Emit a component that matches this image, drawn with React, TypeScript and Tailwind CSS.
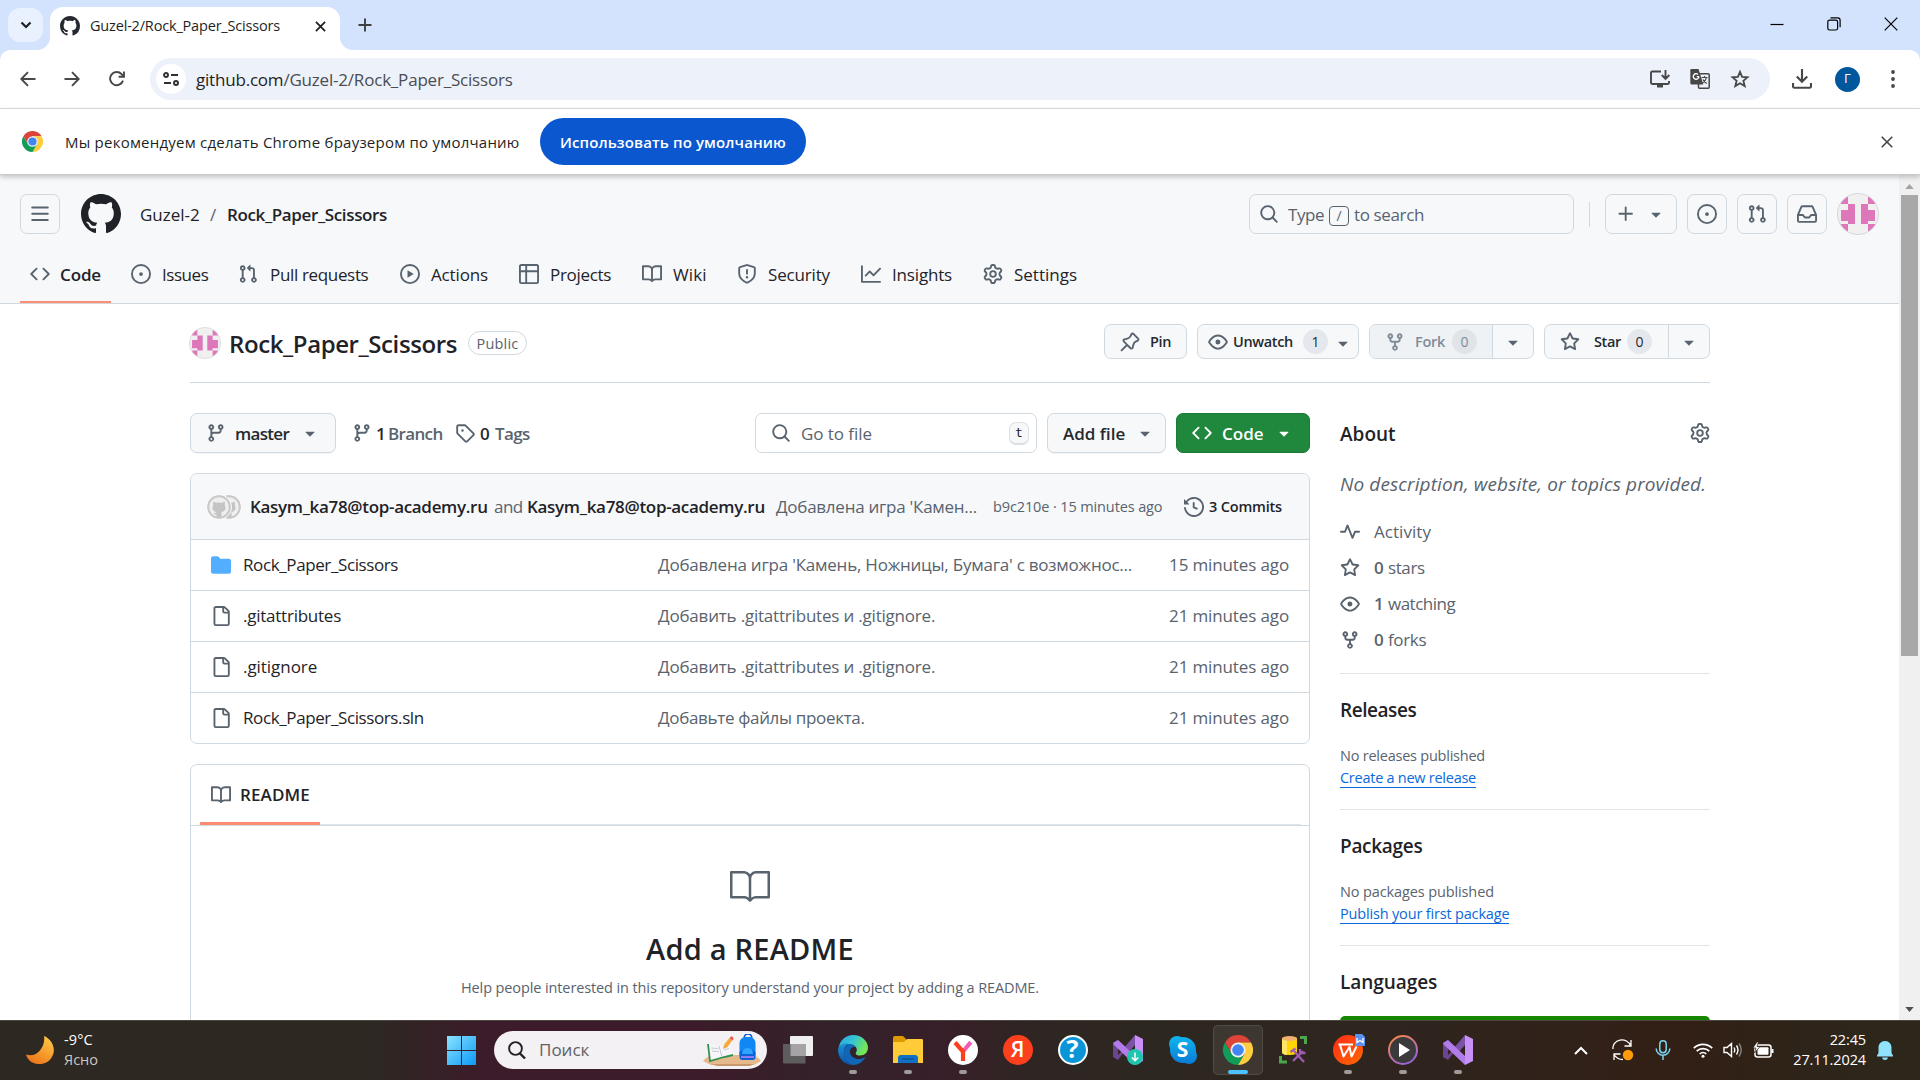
import type { ReactNode } from 'react';
import { clsx } from 'clsx';

const PATHS = {
  code: 'm11.28 3.22 4.25 4.25a.75.75 0 0 1 0 1.06l-4.25 4.25a.749.749 0 0 1-1.275-.326.749.749 0 0 1 .215-.734L13.94 8l-3.72-3.72a.749.749 0 0 1 .326-1.275.749.749 0 0 1 .734.215Zm-6.56 0a.751.751 0 0 1 1.042.018.751.751 0 0 1 .018 1.042L2.06 8l3.72 3.72a.749.749 0 0 1-.326 1.275.749.749 0 0 1-.734-.215L.47 8.53a.75.75 0 0 1 0-1.06Z',
  issue: 'M8 9.5a1.5 1.5 0 1 0 0-3 1.5 1.5 0 0 0 0 3Z M8 0a8 8 0 1 1 0 16A8 8 0 0 1 8 0ZM1.5 8a6.5 6.5 0 1 0 13 0 6.5 6.5 0 0 0-13 0Z',
  pr: 'M1.5 3.25a2.25 2.25 0 1 1 3 2.122v5.256a2.251 2.251 0 1 1-1.5 0V5.372A2.25 2.25 0 0 1 1.5 3.25Zm5.677-.177L9.573.677A.25.25 0 0 1 10 .854V2.5h1A2.5 2.5 0 0 1 13.5 5v5.628a2.251 2.251 0 1 1-1.5 0V5a1 1 0 0 0-1-1h-1v1.646a.25.25 0 0 1-.427.177L7.177 3.427a.25.25 0 0 1 0-.354ZM3.75 2.5a.75.75 0 1 0 0 1.5.75.75 0 0 0 0-1.5Zm0 9.5a.75.75 0 1 0 0 1.5.75.75 0 0 0 0-1.5Zm8.25.75a.75.75 0 1 0 1.5 0 .75.75 0 0 0-1.5 0Z',
  play: 'M8 0a8 8 0 1 1 0 16A8 8 0 0 1 8 0ZM1.5 8a6.5 6.5 0 1 0 13 0 6.5 6.5 0 0 0-13 0Zm4.879-2.773 4.264 2.559a.25.25 0 0 1 0 .428l-4.264 2.559A.25.25 0 0 1 6 10.559V5.442a.25.25 0 0 1 .379-.215Z',
  table: 'M0 1.75C0 .784.784 0 1.75 0h12.5C15.216 0 16 .784 16 1.75v12.5A1.75 1.75 0 0 1 14.25 16H1.75A1.75 1.75 0 0 1 0 14.25ZM6.5 6.5v8h7.75a.25.25 0 0 0 .25-.25V6.5Zm8-1.5V1.75a.25.25 0 0 0-.25-.25H6.5V5Zm-13 1.5v7.75c0 .138.112.25.25.25H5v-8ZM5 5V1.5H1.75a.25.25 0 0 0-.25.25V5Z',
  book: 'M0 1.75A.75.75 0 0 1 .75 1h4.253c1.227 0 2.317.59 3 1.501A3.743 3.743 0 0 1 11.006 1h4.245a.75.75 0 0 1 .75.75v10.5a.75.75 0 0 1-.75.75h-4.507a2.25 2.25 0 0 0-1.591.659l-.622.621a.75.75 0 0 1-1.06 0l-.622-.621A2.25 2.25 0 0 0 5.258 13H.75a.75.75 0 0 1-.75-.75Zm7.251 10.324.004-5.073-.002-2.253A2.25 2.25 0 0 0 5.003 2.5H1.5v9h3.757a3.75 3.75 0 0 1 1.994.574ZM8.755 4.75l-.004 7.322a3.752 3.752 0 0 1 1.992-.572H14.5v-9h-3.495a2.25 2.25 0 0 0-2.25 2.25Z',
  shield: 'M7.467.133a1.748 1.748 0 0 1 1.066 0l5.25 1.68A1.75 1.75 0 0 1 15 3.48V7c0 1.566-.32 3.182-1.303 4.682-.983 1.498-2.585 2.813-5.032 3.855a1.697 1.697 0 0 1-1.33 0c-2.447-1.042-4.049-2.357-5.032-3.855C1.32 10.182 1 8.566 1 7V3.48a1.75 1.75 0 0 1 1.217-1.667Zm.61 1.429a.25.25 0 0 0-.153 0l-5.25 1.68a.25.25 0 0 0-.174.238V7c0 1.358.275 2.666 1.057 3.86.784 1.194 2.121 2.34 4.366 3.297a.196.196 0 0 0 .154 0c2.245-.956 3.582-2.104 4.366-3.298C13.225 9.666 13.5 8.36 13.5 7V3.48a.251.251 0 0 0-.174-.237l-5.25-1.68ZM8.75 4.75v3a.75.75 0 0 1-1.5 0v-3a.75.75 0 0 1 1.5 0ZM9 10.5a1 1 0 1 1-2 0 1 1 0 0 1 2 0Z',
  graph: 'M1.5 1.75V13.5h13.75a.75.75 0 0 1 0 1.5H.75a.75.75 0 0 1-.75-.75V1.75a.75.75 0 0 1 1.5 0Zm14.28 2.53-5.25 5.25a.75.75 0 0 1-1.06 0L7 7.06 4.28 9.78a.751.751 0 0 1-1.042-.018.751.751 0 0 1-.018-1.042l3.25-3.25a.75.75 0 0 1 1.06 0L10 7.94l4.72-4.72a.751.751 0 0 1 1.042.018.751.751 0 0 1 .018 1.042Z',
  gear: 'M8 0a8.2 8.2 0 0 1 .701.031C9.444.095 9.99.645 10.16 1.29l.288 1.107c.018.066.079.158.212.224.231.114.454.243.668.386.123.082.233.09.299.071l1.103-.303c.644-.176 1.392.021 1.82.63.27.385.506.792.704 1.218.315.675.111 1.422-.364 1.891l-.814.806c-.049.048-.098.147-.088.294.016.257.016.515 0 .772-.01.147.038.246.088.294l.814.806c.475.469.679 1.216.364 1.891a7.977 7.977 0 0 1-.704 1.217c-.428.61-1.176.807-1.82.63l-1.102-.302c-.067-.019-.177-.011-.3.071a5.909 5.909 0 0 1-.668.386c-.133.066-.194.158-.211.224l-.29 1.106c-.168.646-.715 1.196-1.458 1.26a8.006 8.006 0 0 1-1.402 0c-.743-.064-1.289-.614-1.458-1.26l-.289-1.106c-.018-.066-.079-.158-.212-.224a5.738 5.738 0 0 1-.668-.386c-.123-.082-.233-.09-.299-.071l-1.103.303c-.644.176-1.392-.021-1.82-.63a8.12 8.12 0 0 1-.704-1.218c-.315-.675-.111-1.422.363-1.891l.815-.806c.05-.048.098-.147.088-.294a6.214 6.214 0 0 1 0-.772c.01-.147-.038-.246-.088-.294l-.815-.806C.635 6.045.431 5.298.746 4.623a7.92 7.92 0 0 1 .704-1.217c.428-.61 1.176-.807 1.82-.63l1.102.302c.067.019.177.011.3-.071.214-.143.437-.272.668-.386.133-.066.194-.158.211-.224l.29-1.106C6.009.645 6.556.095 7.299.03 7.53.01 7.764 0 8 0Zm-.571 1.525c-.036.003-.108.036-.137.146l-.289 1.105c-.147.561-.549.967-.998 1.189-.173.086-.34.183-.5.29-.417.278-.97.423-1.529.27l-1.103-.303c-.109-.03-.175.016-.195.045-.22.312-.412.644-.573.99-.014.031-.021.11.059.19l.815.806c.411.406.562.957.53 1.456a4.709 4.709 0 0 0 0 .582c.032.499-.119 1.05-.53 1.456l-.815.806c-.081.08-.073.159-.059.19.162.346.353.677.573.989.02.03.085.076.195.046l1.102-.303c.56-.153 1.113-.008 1.53.27.161.107.328.204.501.29.447.222.85.629.997 1.189l.289 1.105c.029.109.101.143.137.146a6.6 6.6 0 0 0 1.142 0c.036-.003.108-.036.137-.146l.289-1.105c.147-.561.549-.967.998-1.189.173-.086.34-.183.5-.29.417-.278.97-.423 1.529-.27l1.103.303c.109.029.175-.016.195-.045.22-.313.411-.644.573-.99.014-.031.021-.11-.059-.19l-.815-.806c-.411-.406-.562-.957-.53-1.456a4.709 4.709 0 0 0 0-.582c-.032-.499.119-1.05.53-1.456l.815-.806c.081-.08.073-.159.059-.19a6.464 6.464 0 0 0-.573-.989c-.02-.03-.085-.076-.195-.046l-1.102.303c-.56.153-1.113.008-1.53-.27a4.44 4.44 0 0 0-.501-.29c-.447-.222-.85-.629-.997-1.189l-.289-1.105c-.029-.11-.101-.143-.137-.146a6.6 6.6 0 0 0-1.142 0ZM11 8a3 3 0 1 1-6 0 3 3 0 0 1 6 0ZM9.5 8a1.5 1.5 0 1 0-3.001.001A1.5 1.5 0 0 0 9.5 8Z',
  github: 'M8 0c4.42 0 8 3.58 8 8a8.013 8.013 0 0 1-5.45 7.59c-.4.08-.55-.17-.55-.38 0-.27.01-1.13.01-2.2 0-.75-.25-1.23-.54-1.48 1.78-.2 3.65-.88 3.65-3.95 0-.88-.31-1.59-.82-2.15.08-.2.36-1.02-.08-2.12 0 0-.67-.22-2.2.82-.64-.18-1.32-.27-2-.27-.68 0-1.36.09-2 .27-1.53-1.03-2.2-.82-2.2-.82-.44 1.1-.16 1.92-.08 2.12-.51.56-.82 1.28-.82 2.15 0 3.06 1.86 3.75 3.64 3.95-.23.2-.44.55-.51 1.07-.46.21-1.61.55-2.33-.66-.15-.24-.6-.83-1.23-.82-.67.01-.27.38.01.53.34.19.73.9.82 1.13.16.45.68 1.31 2.69.94 0 .67.01 1.3.01 1.49 0 .21-.15.45-.55.38A7.995 7.995 0 0 1 0 8c0-4.42 3.58-8 8-8Z',
  search: 'M10.68 11.74a6 6 0 0 1-7.922-8.982 6 6 0 0 1 8.982 7.922l3.04 3.04a.749.749 0 0 1-.326 1.275.749.749 0 0 1-.734-.215ZM11.5 7a4.499 4.499 0 1 0-8.997 0A4.499 4.499 0 0 0 11.5 7Z',
  branch: 'M9.5 3.25a2.25 2.25 0 1 1 3 2.122V6A2.5 2.5 0 0 1 10 8.5H6a1 1 0 0 0-1 1v1.128a2.251 2.251 0 1 1-1.5 0V5.372a2.25 2.25 0 1 1 1.5 0v1.836A2.493 2.493 0 0 1 6 7h4a1 1 0 0 0 1-1v-.628A2.25 2.25 0 0 1 9.5 3.25Zm-6 0a.75.75 0 1 0 1.5 0 .75.75 0 0 0-1.5 0Zm8.25-.75a.75.75 0 1 0 0 1.5.75.75 0 0 0 0-1.5ZM4.25 12a.75.75 0 1 0 0 1.5.75.75 0 0 0 0-1.5Z',
  tag: 'M1 7.775V2.75C1 1.784 1.784 1 2.75 1h5.025c.464 0 .91.184 1.238.513l6.25 6.25a1.75 1.75 0 0 1 0 2.474l-5.026 5.026a1.75 1.75 0 0 1-2.474 0l-6.25-6.25A1.752 1.752 0 0 1 1 7.775Zm1.5 0c0 .066.026.13.073.177l6.25 6.25a.25.25 0 0 0 .354 0l5.025-5.025a.25.25 0 0 0 0-.354l-6.25-6.25a.25.25 0 0 0-.177-.073H2.75a.25.25 0 0 0-.25.25ZM6 5a1 1 0 1 1 0 2 1 1 0 0 1 0-2Z',
  file: 'M2 1.75C2 .784 2.784 0 3.75 0h6.586c.464 0 .909.184 1.237.513l2.914 2.914c.329.328.513.773.513 1.237v9.586A1.75 1.75 0 0 1 13.25 16h-9.5A1.75 1.75 0 0 1 2 14.25Zm1.75-.25a.25.25 0 0 0-.25.25v12.5c0 .138.112.25.25.25h9.5a.25.25 0 0 0 .25-.25V6h-2.75A1.75 1.75 0 0 1 9 4.25V1.5Zm6.75.062V4.25c0 .138.112.25.25.25h2.688l-.011-.013-2.914-2.914-.013-.011Z',
  folder: 'M1.75 1A1.75 1.75 0 0 0 0 2.75v10.5C0 14.216.784 15 1.75 15h12.5A1.75 1.75 0 0 0 16 13.25v-8.5A1.75 1.75 0 0 0 14.25 3H7.5a.25.25 0 0 1-.2-.1l-.9-1.2C6.07 1.26 5.55 1 5 1H1.75Z',
  history: 'm.427 1.927 1.215 1.215a8.002 8.002 0 1 1-1.6 5.685.75.75 0 1 1 1.493-.154 6.5 6.5 0 1 0 1.18-4.458l1.358 1.358A.25.25 0 0 1 3.896 6H.25A.25.25 0 0 1 0 5.75V2.104a.25.25 0 0 1 .427-.177ZM7.75 4a.75.75 0 0 1 .75.75v2.992l2.028.812a.75.75 0 0 1-.557 1.392l-2.5-1A.751.751 0 0 1 7 8.25v-3.5A.75.75 0 0 1 7.75 4Z',
  pulse: 'M6 2c.306 0 .582.187.696.471L10 10.731l1.304-3.26A.751.751 0 0 1 12 7h3.25a.75.75 0 0 1 0 1.5h-2.742l-1.812 4.528a.751.751 0 0 1-1.392 0L6 4.77 4.696 8.03A.75.75 0 0 1 4 8.5H.75a.75.75 0 0 1 0-1.5h2.742l1.812-4.529A.751.751 0 0 1 6 2Z',
  star: 'M8 .25a.75.75 0 0 1 .673.418l1.882 3.815 4.21.612a.75.75 0 0 1 .416 1.279l-3.046 2.97.719 4.192a.751.751 0 0 1-1.088.791L8 12.347l-3.766 1.98a.75.75 0 0 1-1.088-.79l.72-4.194L.818 6.374a.75.75 0 0 1 .416-1.28l4.21-.611L7.327.668A.75.75 0 0 1 8 .25Zm0 2.445L6.615 5.5a.75.75 0 0 1-.564.41l-3.097.45 2.24 2.184a.75.75 0 0 1 .216.664l-.528 3.084 2.769-1.456a.75.75 0 0 1 .698 0l2.77 1.456-.53-3.084a.75.75 0 0 1 .216-.664l2.24-2.183-3.096-.45a.75.75 0 0 1-.564-.41L8 2.694Z',
  eye: 'M8 2c1.981 0 3.671.992 4.933 2.078 1.27 1.091 2.187 2.345 2.637 3.023a1.62 1.62 0 0 1 0 1.798c-.45.678-1.367 1.932-2.637 3.023C11.67 13.008 9.981 14 8 14c-1.981 0-3.671-.992-4.933-2.078C1.797 10.83.88 9.576.43 8.898a1.62 1.62 0 0 1 0-1.798c.45-.677 1.367-1.931 2.637-3.022C4.33 2.992 6.019 2 8 2ZM1.679 7.932a.12.12 0 0 0 0 .136c.411.622 1.241 1.75 2.366 2.717C5.176 11.758 6.527 12.5 8 12.5c1.473 0 2.825-.742 3.955-1.715 1.124-.967 1.954-2.096 2.366-2.717a.12.12 0 0 0 0-.136c-.412-.621-1.242-1.75-2.366-2.717C10.824 4.242 9.473 3.5 8 3.5c-1.473 0-2.825.742-3.955 1.715-1.124.967-1.954 2.096-2.366 2.717ZM8 10a2 2 0 1 1-.001-3.999A2 2 0 0 1 8 10Z',
  fork: 'M5 5.372v.878c0 .414.336.75.75.75h4.5a.75.75 0 0 0 .75-.75v-.878a2.25 2.25 0 1 1 1.5 0v.878a2.25 2.25 0 0 1-2.25 2.25h-1.5v2.128a2.251 2.251 0 1 1-1.5 0V8.5h-1.5A2.25 2.25 0 0 1 3.5 6.25v-.878a2.25 2.25 0 1 1 1.5 0ZM5 3.25a.75.75 0 1 0-1.5 0 .75.75 0 0 0 1.5 0Zm6.75.75a.75.75 0 1 0 0-1.5.75.75 0 0 0 0 1.5Zm-3 8.75a.75.75 0 1 0-1.5 0 .75.75 0 0 0 1.5 0Z',
  pin: 'm11.294.984 3.722 3.722a1.75 1.75 0 0 1-.504 2.826l-1.327.613a3.089 3.089 0 0 0-1.707 2.084l-.584 2.454c-.317 1.332-1.972 1.8-2.94.832L5.75 11.311 1.78 15.28a.749.749 0 1 1-1.06-1.06l3.969-3.97-2.204-2.204c-.968-.968-.5-2.623.832-2.94l2.454-.584a3.08 3.08 0 0 0 2.084-1.707l.613-1.327a1.75 1.75 0 0 1 2.826-.504ZM6.283 9.723l2.732 2.731a.25.25 0 0 0 .42-.119l.584-2.454a4.586 4.586 0 0 1 2.537-3.098l1.328-.613a.25.25 0 0 0 .072-.404l-3.722-3.722a.25.25 0 0 0-.404.072l-.613 1.328a4.584 4.584 0 0 1-3.098 2.537l-2.454.584a.25.25 0 0 0-.119.42l2.731 2.732Z',
  inbox: 'M2.8 2.06A1.75 1.75 0 0 1 4.41 1h7.18c.7 0 1.333.417 1.61 1.06l2.74 6.395c.04.093.06.194.06.295v4.5A1.75 1.75 0 0 1 14.25 15H1.75A1.75 1.75 0 0 1 0 13.25v-4.5c0-.101.02-.202.06-.295Zm1.61.44a.25.25 0 0 0-.23.152L1.887 8H4.75a.75.75 0 0 1 .6.3L6.625 10h2.75l1.275-1.7a.75.75 0 0 1 .6-.3h2.863L11.82 2.652a.25.25 0 0 0-.23-.152Zm10.09 7h-2.875l-1.275 1.7a.75.75 0 0 1-.6.3h-3.5a.75.75 0 0 1-.6-.3L4.375 9.5H1.5v3.75c0 .138.112.25.25.25h12.5a.25.25 0 0 0 .25-.25Z',
  plus: 'M7.75 2a.75.75 0 0 1 .75.75V7h4.25a.75.75 0 0 1 0 1.5H8.5v4.25a.75.75 0 0 1-1.5 0V8.5H2.75a.75.75 0 0 1 0-1.5H7V2.75A.75.75 0 0 1 7.75 2Z',
  bars: 'M1 2.75A.75.75 0 0 1 1.75 2h12.5a.75.75 0 0 1 0 1.5H1.75A.75.75 0 0 1 1 2.75Zm0 5A.75.75 0 0 1 1.75 7h12.5a.75.75 0 0 1 0 1.5H1.75A.75.75 0 0 1 1 7.75ZM1.75 12h12.5a.75.75 0 0 1 0 1.5H1.75a.75.75 0 0 1 0-1.5Z',
  caret: 'm4.427 7.427 3.396 3.396a.25.25 0 0 0 .354 0l3.396-3.396A.25.25 0 0 0 11.396 7H4.604a.25.25 0 0 0-.177.427Z',
};
type IconName = keyof typeof PATHS;

function Oct({ n, className = 'size-5' }: { n: IconName; className?: string }) {
  return (
    <svg viewBox="0 0 16 16" fill="currentColor" className={clsx('shrink-0', className)}>
      <path d={PATHS[n]} />
    </svg>
  );
}

function Identicon({ className }: { className: string }) {
  return (
    <svg viewBox="0 0 42 42" className={clsx('shrink-0', className)}>
      <defs>
        <clipPath id="avatar-clip"><circle cx="21" cy="21" r="20.5" /></clipPath>
      </defs>
      <circle cx="21" cy="21" r="20.5" fill="#f0f0f0" />
      <g fill="#de77ba" clipPath="url(#avatar-clip)">
        <path d="M4 4h7v7H4zM31 4h7v7h-7zM4 31h7v8H4zM31 31h7v8h-7z" />
        <path d="M11 11h7v20h-7v-3H4V17h7zM24 11h7v6h7v11h-7v3h-7z" />
      </g>
      <circle cx="21" cy="21" r="20.5" fill="none" stroke="#d5d7da" strokeWidth="1" />
    </svg>
  );
}

function ChromeLogo({ className }: { className: string }) {
  return (
    <svg viewBox="0 0 48 48" className={className}>
      <path d="M24 12H44.8A24 24 0 0 0 3.2 12L13.6 30Z" fill="#db4437" />
      <path d="M34.4 30 24 48A24 24 0 0 0 44.8 12H24Z" fill="#ffcd40" />
      <path d="M13.6 30 3.2 12A24 24 0 0 0 24 48L34.4 30Z" fill="#0f9d58" />
      <circle cx="24" cy="24" r="12" fill="#f1f1f1" />
      <circle cx="24" cy="24" r="9.3" fill="#4285f4" />
    </svg>
  );
}

function TabStrip() {
  return (
    <div className="flex h-[50px] shrink-0 bg-[#d3e3fd] text-[#1f1f1f]">
      <div className="ml-2 mt-2 grid h-[34px] w-[35px] place-items-center rounded-[12px] bg-[#e9f0fe]">
        <svg viewBox="0 0 12 12" className="size-3" fill="none" stroke="#1f1f1f" strokeWidth="2.2"><path d="m1.5 3.5 4.5 4.5 4.5-4.5" /></svg>
      </div>
      <div className="relative ml-[7px] mt-[7px] flex h-[43px] w-[290px] items-center rounded-t-[13px] bg-white pb-[14px] pl-[10px]">
        <svg viewBox="0 0 13 13" className="absolute -left-[13px] bottom-0 size-[13px]" fill="#fff"><path d="M13 0v13H0A13 13 0 0 0 13 0Z" /></svg>
        <svg viewBox="0 0 13 13" className="absolute -right-[13px] bottom-0 size-[13px]" fill="#fff"><path d="M0 0v13h13A13 13 0 0 1 0 0Z" /></svg>
        <div className="flex w-full items-center pt-[9px]">
          <Oct n="github" className="size-5 text-[#24292f]" />
          <span className="ml-[10px] w-[220px] text-[14.5px] tracking-[-0.18px]">Guzel-2/Rock_Paper_Scissors</span>
          <svg viewBox="0 0 12 12" className="ml-[5px] size-[11px]" stroke="#1f1f1f" strokeWidth="1.9"><path d="m1 1 10 10M11 1 1 11" /></svg>
        </div>
      </div>
      <svg viewBox="0 0 14 14" className="ml-[18px] mt-[18px] size-[14px]" stroke="#3c4043" strokeWidth="1.9"><path d="M7 .5v13M.5 7h13" /></svg>
      <div className="ml-auto flex h-[48px] items-center gap-[43px] pr-[22px]">
        <svg viewBox="0 0 14 14" className="size-[14px]" stroke="#000" strokeWidth="1.2"><path d="M.5 7.5h13" /></svg>
        <svg viewBox="0 0 14 14" className="size-[14px]" fill="none" stroke="#000" strokeWidth="1.2"><rect x=".8" y="3.2" width="9.8" height="9.8" rx="1.8" /><path d="M3.5.9h7.2a2.4 2.4 0 0 1 2.4 2.4v7" /></svg>
        <svg viewBox="0 0 14 14" className="size-[14px]" stroke="#000" strokeWidth="1.2"><path d="m.7.7 12.6 12.6M13.3.7.7 13.3" /></svg>
      </div>
    </div>
  );
}

function Toolbar() {
  return (
    <div className="h-[59px] shrink-0 bg-[#d3e3fd]">
      <div className="flex h-[59px] items-center rounded-t-[10px] border-b border-[#dcdee1] bg-white text-[#474747]">
        <svg viewBox="0 0 16 16" className="ml-5 size-4" fill="none" stroke="currentColor" strokeWidth="1.9"><path d="M15.5 8H1.5M8 1.2 1.3 8 8 14.8" /></svg>
        <svg viewBox="0 0 16 16" className="ml-[28px] size-4" fill="none" stroke="currentColor" strokeWidth="1.9"><path d="M.5 8h14M8 1.2 14.7 8 8 14.8" /></svg>
        <svg viewBox="0 0 16 16" className="ml-[29px] mr-px size-4" fill="none" stroke="currentColor" strokeWidth="1.9"><path d="M14 9.6A6.6 6.6 0 1 1 12.6 3.2L15 5.6M15 .4v5.4H9.6" /></svg>
        <div className="ml-[24px] flex h-[42px] w-[1620px] items-center rounded-full bg-[#edf1fa] pl-[6px]">
          <div className="grid size-[30px] place-items-center rounded-full bg-white">
            <svg viewBox="0 0 16 14" className="h-[14px] w-4" fill="none" stroke="#303030" strokeWidth="1.9"><circle cx="3" cy="3" r="2" /><path d="M8 3h7M1 11h7" /><circle cx="13" cy="11" r="2" /></svg>
          </div>
          <span className="ml-[10px] whitespace-pre pt-px text-[17px] tracking-[-0.2px] text-[#4a4d51]"><span className="text-[#1f1f1f]">github.com</span>/Guzel-2/Rock_Paper_Scissors</span>
          <svg viewBox="0 0 20 18" className="ml-auto h-[18px] w-5" fill="none" stroke="currentColor" strokeWidth="1.9"><path d="M11 1.5H2.2Q1 1.5 1 2.7v10.1Q1 14 2.2 14h15.6Q19 14 19 12.8V11M15.5 0v8M11.8 5l3.7 3.8L19.3 5" /><path d="M7 16h6" strokeWidth="3" /></svg>
          <svg viewBox="0 0 20 20" className="ml-[20px] size-5"><rect x="8.5" y="4.8" width="10.7" height="14.4" rx="1" fill="#edf1fa" stroke="#474747" strokeWidth="1.5" /><path d="M1.5 0h7l4.8 15.5H1.8Q.3 15.5.3 14V1.2Q.3 0 1.5 0Z" fill="#474747" /><path d="M9.2 7.6H6.7M8.9 7.7A2.8 2.8 0 1 1 8 5.4" stroke="#fff" strokeWidth="1.4" fill="none" /><path d="M11.5 8.5h6M14.500 7v1.5M16.5 8.5c-.5 2.500-2 4-4 5.500M13 10.5c.8 1.8 2 3 3.700 4" stroke="#474747" strokeWidth="1.2" fill="none" /></svg>
          <svg viewBox="0 0 20 20" className="ml-[20px] mr-[20px] size-5" fill="none" stroke="currentColor" strokeWidth="1.8" strokeLinejoin="miter"><path d="m10 2.8 2.1 5 5.4.5-4.1 3.5 1.3 5.3-4.7-2.9-4.7 2.9 1.3-5.3L2.5 8.3l5.4-.5Z" /></svg>
        </div>
        <svg viewBox="0 0 20 20" className="ml-[22px] size-5" fill="none" stroke="currentColor" strokeWidth="2.1"><path d="M10 0v12.5M4.8 7.5l5.2 5.3 5.2-5.3M1 14v3.3q0 1.4 1.4 1.4h15.2q1.4 0 1.4-1.4V14" /></svg>
        <div className="ml-[23px] grid size-[25px] place-items-center rounded-full bg-[#01579b] text-[13px] text-white">Г</div>
        <svg viewBox="0 0 4 18" className="ml-[31px] h-[18px] w-1" fill="currentColor"><circle cx="2" cy="2" r="1.9" /><circle cx="2" cy="9" r="1.9" /><circle cx="2" cy="16" r="1.9" /></svg>
      </div>
    </div>
  );
}

function InfoBar() {
  return (
    <div className="relative z-10 flex h-[66px] shrink-0 items-center border-b border-[#c9cccf] bg-white text-[15px] text-[#1f1f1f] shadow-[0_2px_5px_rgba(0,0,0,0.22)]">
      <ChromeLogo className="ml-[22px] size-[21px]" />
      <span className="ml-[22px] w-[476px] whitespace-nowrap pt-px tracking-[0.23px]">Мы рекомендуем сделать Chrome браузером по умолчанию</span>
      <div className="-ml-px flex h-[47px] w-[266px] items-center justify-center whitespace-nowrap rounded-full bg-[#0b57d0] pt-px font-semibold tracking-[0.12px] text-white">Использовать по умолчанию</div>
      <svg viewBox="0 0 12 12" className="ml-auto mr-[27px] size-[12px]" stroke="#474747" strokeWidth="1.6"><path d="m.7.7 10.6 10.6M11.3.7.7 11.3" /></svg>
    </div>
  );
}

function HeaderButton({ className, children }: { className?: string; children: ReactNode }) {
  return <div className={clsx('flex h-10 shrink-0 items-center justify-center rounded-[7px] border border-[#d1d9e0] text-[#59636e]', className)}>{children}</div>;
}

const NAV: { icon: IconName; label: string; box: string; text: string }[] = [
  { icon: 'code', label: 'Code', box: 'w-[91px]', text: 'font-semibold tracking-[-0.13px]' },
  { icon: 'issue', label: 'Issues', box: 'ml-[10px] w-[97px]', text: 'ml-px tracking-[-0.45px]' },
  { icon: 'pr', label: 'Pull requests', box: 'ml-[10px] w-[152px]', text: 'ml-[2px] tracking-[-0.34px]' },
  { icon: 'play', label: 'Actions', box: 'ml-[10px] w-[109px]', text: 'ml-px tracking-[-0.14px]' },
  { icon: 'table', label: 'Projects', box: 'ml-[10px] w-[112px]', text: 'ml-px tracking-[-0.32px]' },
  { icon: 'book', label: 'Wiki', box: 'ml-[11px] w-[85px]', text: 'ml-px tracking-[0.1px]' },
  { icon: 'shield', label: 'Security', box: 'ml-[10px] w-[113px]', text: 'ml-px tracking-[-0.16px]' },
  { icon: 'graph', label: 'Insights', box: 'ml-[11px] w-[112px]', text: 'ml-px tracking-[-0.17px]' },
  { icon: 'gear', label: 'Settings', box: 'ml-[10px] w-[113px]', text: 'ml-px' },
];

function RepoHeader() {
  return (
    <div className="h-[129px] border-b border-[#d1d9e0] bg-[#f6f8fa] pt-[19px] text-[17px] text-[#1f2328]">
      <div className="flex h-10 items-center pl-5">
        <HeaderButton className="w-10"><Oct n="bars" /></HeaderButton>
        <Oct n="github" className="ml-[21px] size-10" />
        <span className="ml-[19px] w-[60px] pt-px">Guzel-2</span>
        <span className="ml-[10px] w-[8px] pt-px text-[#59636e]">/</span>
        <span className="ml-[9px] pt-px font-semibold tracking-[-0.37px]">Rock_Paper_Scissors</span>
        <div className="ml-auto flex h-10 w-[325px] items-center rounded-[7px] border border-[#d1d9e0] pl-[9px] text-[#59636e]">
          <Oct n="search" />
          <span className="ml-[9px] pt-px tracking-[-0.46px]">Type</span>
          <span className="mx-[5px] mt-[3px] grid h-[20px] w-[20px] place-items-center rounded-[4px] border border-[#59636e] text-[14px] leading-none">/</span>
          <span className="pt-px tracking-[-0.37px]">to search</span>
        </div>
        <div className="ml-[15px] h-[25px] w-px bg-[#d1d9e0]" />
        <HeaderButton className="ml-[15px] w-[72px] gap-[10px]"><Oct n="plus" /><Oct n="caret" /></HeaderButton>
        <HeaderButton className="ml-[10px] w-10"><Oct n="issue" /></HeaderButton>
        <HeaderButton className="ml-[10px] w-10"><Oct n="pr" /></HeaderButton>
        <HeaderButton className="ml-[10px] w-10"><Oct n="inbox" /></HeaderButton>
        <Identicon className="ml-[10px] mr-[20px] size-[42px]" />
      </div>
      <div className="flex h-[69px] pl-5">
        {NAV.map((t, i) => (
          <div key={t.label} className={clsx('relative flex shrink-0 items-center gap-[10px] pl-[10px] pt-[11px]', t.box)}>
            <Oct n={t.icon} className="size-5 text-[#59636e]" />
            <span className={clsx('whitespace-nowrap pt-px', t.text)}>{t.label}</span>
            {i === 0 && <div className="absolute bottom-0 left-0 h-[2px] w-full bg-[#fd8c73]" />}
          </div>
        ))}
      </div>
    </div>
  );
}

function Counter({ children, className = 'bg-[#e4e8ec]' }: { children: ReactNode; className?: string }) {
  return <span className={clsx('grid size-[25px] place-items-center rounded-full text-[14px] font-medium', className)}>{children}</span>;
}

const BTN = 'flex items-center rounded-[7px] border border-[#d1d9e0] bg-[#f6f8fa]';

function RepoTitle() {
  return (
    <div className="flex h-[79px] items-start border-b border-[#d1d9e0] text-[14.5px] font-semibold text-[#25292e]">
      <Identicon className="-ml-px mt-[23px] size-8" />
      <span className="ml-[8px] mt-[22px] w-[239px] text-[24px] leading-[36px] tracking-[-0.41px] text-[#1f2328]">Rock_Paper_Scissors</span>
      <span className="mt-[27px] flex h-[24px] w-[59px] items-center justify-center rounded-full border border-[#d1d9e0] pt-px font-normal tracking-[0.21px] text-[#59636e]">Public</span>
      <div className="ml-auto mt-5 flex gap-[10px]">
        <div className={clsx(BTN, 'h-[35px] w-[83px] pl-[15px]')}><Oct n="pin" className="size-5 text-[#59636e]" /><span className="ml-[10px] tracking-[-0.39px]">Pin</span></div>
        <div className={clsx(BTN, 'h-[35px] w-[162px] pl-[10px]')}>
          <Oct n="eye" className="size-5 text-[#59636e]" /><span className="ml-[5px] w-[60px] tracking-[-0.34px]">Unwatch</span>
          <Counter className="ml-[10px] bg-[#e4e8ec]">1</Counter><Oct n="caret" className="ml-[5px] mt-[2px] size-5 text-[#59636e]" />
        </div>
        <div className={clsx(BTN, 'h-[35px] w-[165px] overflow-hidden')}>
          <div className="flex h-full w-[123px] items-center border-r border-[#d1d9e0] bg-[#eff2f5] pl-[15px] text-[#818b98]">
            <Oct n="fork" /><span className="ml-[10px] w-[30px] tracking-[-0.29px]">Fork</span><Counter className="ml-[7px] bg-[#e0e4e8]">0</Counter>
          </div>
          <Oct n="caret" className="ml-[10px] size-5 text-[#59636e]" />
        </div>
        <div className={clsx(BTN, 'h-[35px] w-[166px]')}>
          <div className="flex h-full w-[124px] items-center border-r border-[#d1d9e0] pl-[15px]">
            <Oct n="star" className="size-5 text-[#59636e]" /><span className="ml-[14px] w-[27px] tracking-[-0.35px]">Star</span><Counter className="ml-[6px] bg-[#e4e8ec]">0</Counter>
          </div>
          <Oct n="caret" className="ml-[10px] size-5 text-[#59636e]" />
        </div>
      </div>
    </div>
  );
}

function FileToolbar() {
  return (
    <div className="flex h-10 items-center text-[17px] text-[#25292e]">
      <div className={clsx(BTN, 'h-10 w-[146px] pl-[15px] font-semibold shadow-[0_1px_0_rgba(31,35,40,0.04)]')}>
        <Oct n="branch" className="size-5 text-[#59636e]" /><span className="ml-[9px] w-[54px] pt-px tracking-[-0.7px]">master</span><Oct n="caret" className="ml-[11px] size-5 text-[#59636e]" />
      </div>
      <Oct n="branch" className="ml-[16px] size-5 text-[#59636e]" />
      <span className="ml-[4px] w-[12px] pt-px font-semibold">1</span>
      <span className="w-[67px] pt-px font-semibold tracking-[-0.65px] text-[#59636e]">Branch</span>
      <Oct n="tag" className="size-5 text-[#59636e]" />
      <span className="ml-[5px] w-[15px] pt-px font-semibold">0</span>
      <span className="pt-px font-semibold tracking-[-0.6px] text-[#59636e]">Tags</span>
      <div className="ml-auto flex h-10 w-[282px] items-center rounded-[7px] border border-[#d1d9e0] pl-[15px] text-[#59636e]">
        <Oct n="search" /><span className="ml-[10px] pt-px tracking-[-0.06px]">Go to file</span>
        <span className="ml-auto mr-[7px] grid h-[23px] w-[20px] place-items-center rounded-[7px] border border-b-2 border-[#dbe0e5] bg-[#f6f8fa] font-['DejaVu_Sans_Mono',monospace] text-[13px] leading-none text-[#1f2328]">t</span>
      </div>
      <div className={clsx(BTN, 'ml-[10px] h-10 w-[119px] pl-[15px] font-semibold shadow-[0_1px_0_rgba(31,35,40,0.04)]')}>
        <span className="w-[63px] whitespace-nowrap pt-px">Add file</span><Oct n="caret" className="ml-[9px] size-5 text-[#59636e]" />
      </div>
      <div className="ml-[10px] flex h-10 w-[134px] items-center rounded-[7px] border border-[#1b7a36] bg-[#1f883d] pl-[15px] font-semibold text-white">
        <Oct n="code" /><span className="ml-[10px] w-[43px] pt-px">Code</span><Oct n="caret" className="ml-[9px] size-5" />
      </div>
    </div>
  );
}

const FILES: { icon: IconName; name: string; nameCls: string; msg: string; msgCls: string; when: string }[] = [
  { icon: 'folder', name: 'Rock_Paper_Scissors', nameCls: 'tracking-[-0.39px]', msg: "Добавлена игра 'Камень, Ножницы, Бумага' с возможнос...", msgCls: 'tracking-[-0.22px]', when: '15 minutes ago' },
  { icon: 'file', name: '.gitattributes', nameCls: 'tracking-[-0.24px]', msg: 'Добавить .gitattributes и .gitignore.', msgCls: 'tracking-[-0.2px]', when: '21 minutes ago' },
  { icon: 'file', name: '.gitignore', nameCls: 'tracking-[-0.05px]', msg: 'Добавить .gitattributes и .gitignore.', msgCls: 'tracking-[-0.2px]', when: '21 minutes ago' },
  { icon: 'file', name: 'Rock_Paper_Scissors.sln', nameCls: 'tracking-[-0.39px]', msg: 'Добавьте файлы проекта.', msgCls: 'tracking-[-0.33px]', when: '21 minutes ago' },
];

function Octocat({ className }: { className?: string }) {
  return (
    <svg viewBox="0 0 26 26" className={clsx('size-[26px] shrink-0', className)}>
      <circle cx="13" cy="13" r="12.5" fill="#c9c9c9" stroke="#fff" />
      <circle cx="13" cy="13" r="9.8" fill="#efefef" />
      <path d="M7.5 7.5 10 8.8q3-.7 6 0l2.500-1.300q.8 2 .3 3.500 2.400 6-3.300 7v5.300h-5V20.500q-2 .3-3-1.800 2 .8 3-.7-5.700-1-3.300-7-.5-1.500.3-3.500Z" fill="#c4c4c4" />
    </svg>
  );
}

function FileTable() {
  return (
    <div className="mt-5 overflow-hidden rounded-[7px] border border-[#d1d9e0] text-[17px] text-[#1f2328]">
      <div className="flex h-[66px] items-center whitespace-nowrap border-b border-[#d1d9e0] bg-[#f6f8fa] pl-[15px] text-[#59636e]">
        <div className="relative flex w-[36px]">
          <Octocat className="relative z-10" /><Octocat className="-ml-4" />
        </div>
        <span className="ml-[8px] w-[244px] font-semibold tracking-[-0.32px] text-[#1f2328]">Kasym_ka78@top-academy.ru</span>
        <span className="w-[33px] tracking-[-0.5px]">and</span>
        <span className="w-[249px] font-semibold tracking-[-0.31px] text-[#1f2328]">Kasym_ka78@top-academy.ru</span>
        <span className="w-[217px] tracking-[-0.26px]">Добавлена игра 'Камен...</span>
        <span className="w-[191px] text-[14.5px] tracking-[-0.12px]">b9c210e · 15 minutes ago</span>
        <Oct n="history" /><span className="ml-[5px] text-[14.5px] font-semibold tracking-[-0.18px] text-[#1f2328]">3 Commits</span>
      </div>
      {FILES.map((f, i) => (
        <div key={f.name} className={clsx('flex items-center whitespace-nowrap pr-[20px]', i < 3 ? 'h-[51px] border-b border-[#d1d9e0]' : 'h-[50px]')}>
          <Oct n={f.icon} className={clsx('ml-5 size-5', f.icon === 'folder' ? 'text-[#54aeff]' : 'text-[#59636e]')} />
          <span className={clsx('ml-[12px] w-[415px]', f.nameCls)}>{f.name}</span>
          <span className={clsx('text-[#59636e]', f.msgCls)}>{f.msg}</span>
          <span className="ml-auto tracking-[-0.13px] text-[#59636e]">{f.when}</span>
        </div>
      ))}
    </div>
  );
}

function Readme() {
  return (
    <div className="mt-5 h-[400px] rounded-t-[7px] border border-[#d1d9e0] text-[#1f2328]">
      <div className="h-[61px] border-b border-[#d1d9e0] pl-[9px] pr-[8px]">
        <div className="flex h-[60px] border-b border-[#dfe4e9]">
          <div className="relative flex w-[120px] items-center pl-[11px] text-[17px] font-semibold">
            <Oct n="book" className="size-5 text-[#59636e]" /><span className="ml-[9px] tracking-[0.1px]">README</span>
            <div className="absolute -bottom-px left-0 h-[3px] w-full bg-[#fd8c73]" />
          </div>
        </div>
      </div>
      <div className="flex flex-col items-center">
        <svg viewBox="0 0 24 24" className="mt-[40px] size-10" fill="#59636e">
          <path d="M0 3.75A.75.75 0 0 1 .75 3h7.497c1.566 0 2.945.8 3.751 2.014A4.495 4.495 0 0 1 15.75 3h7.5a.75.75 0 0 1 .75.75v15.063a.752.752 0 0 1-.755.75l-7.682-.052a3 3 0 0 0-2.142.878l-.89.891a.75.75 0 0 1-1.061 0l-.902-.901a2.996 2.996 0 0 0-2.121-.879H.75a.75.75 0 0 1-.75-.75Zm12.75 15.232a4.503 4.503 0 0 1 2.823-.971l6.927.047V4.5h-6.75a3 3 0 0 0-3 3ZM11.247 7.497a3 3 0 0 0-3-2.997H1.5V18h6.947c1.018 0 2.006.346 2.803.98Z" />
        </svg>
        <div className="mt-[24px] text-[29px] font-semibold leading-[38px] tracking-[0.23px]">Add a README</div>
        <div className="mt-[10px] text-[14.5px] leading-[20px] tracking-[-0.11px] text-[#59636e]">Help people interested in this repository understand your project by adding a README.</div>
      </div>
    </div>
  );
}

function Stat({ icon, count, label, cls }: { icon: IconName; count?: string; label: string; cls: string }) {
  return (
    <div className="flex h-9 items-center text-[17px] text-[#59636e]">
      <Oct n={icon} />
      {count && <span className="-mr-[14px] ml-[14px] w-[14px] font-semibold">{count}</span>}
      <span className={clsx('ml-[14px]', cls)}>{label}</span>
    </div>
  );
}

function SideSection({ title, titleCls, text, textCls, link, linkCls }: Record<'title' | 'titleCls' | 'text' | 'textCls' | 'link' | 'linkCls', string>) {
  return (
    <div className="border-t border-[#dfe4e8] pb-5 text-[14.5px] leading-[22px]">
      <div className={clsx('flex h-[71px] items-center text-[19px] font-semibold text-[#1f2328]', titleCls)}>{title}</div>
      <div className={clsx('h-[22px] text-[#59636e]', textCls)}>{text}</div>
      <div className="flex h-[22px]"><span className={clsx('h-[21px] border-b border-[#0969da] text-[#0969da]', linkCls)}>{link}</span></div>
    </div>
  );
}

function Sidebar() {
  return (
    <div className="w-[370px]">
      <div className="flex h-[42px] items-center justify-between text-[19px] font-semibold text-[#1f2328]">
        About<Oct n="gear" className="mb-[2px] size-5 text-[#59636e]" />
      </div>
      <div className="flex h-[59px] items-center whitespace-nowrap text-[19px] italic text-[#59636e]">
        <span className="tracking-[0.12px]">No description, website, or topics provided.</span>
      </div>
      <Stat icon="pulse" label="Activity" cls="tracking-[0.05px]" />
      <Stat icon="star" count="0" label="stars" cls="tracking-[-0.4px]" />
      <Stat icon="eye" count="1" label="watching" cls="tracking-[-0.5px]" />
      <Stat icon="fork" count="0" label="forks" cls="tracking-[-0.35px]" />
      <div className="h-[15px]" />
      <SideSection title="Releases" titleCls="tracking-[-0.45px]" text="No releases published" textCls="tracking-[-0.23px]" link="Create a new release" linkCls="tracking-[-0.26px]" />
      <SideSection title="Packages" titleCls="tracking-[-0.3px]" text="No packages published" textCls="tracking-[-0.12px]" link="Publish your first package" linkCls="tracking-[-0.17px]" />
      <div className="border-t border-[#dfe4e8]">
        <div className="flex h-[70px] items-center pt-[2px] text-[19px] font-semibold tracking-[-0.05px] text-[#1f2328]">Languages</div>
        <div className="h-[10px] rounded-[5px] bg-[#178600]" />
      </div>
    </div>
  );
}

function Scrollbar() {
  return (
    <div className="flex w-[21px] shrink-0 flex-col items-center bg-[#f0f0f0]">
      <div className="flex h-[20px] items-center"><svg viewBox="0 0 10 6" className="mt-[3px] h-[5px] w-[9px]" fill="#a3a3a3"><path d="M5 0 10 6H0Z" /></svg></div>
      <div className="h-[461px] w-[17px] bg-[#a8a8a8]" />
      <svg viewBox="0 0 10 6" className="mb-[8px] mt-auto h-[5px] w-[9px]" fill="#505050"><path d="M0 0h10L5 6Z" /></svg>
    </div>
  );
}

function VisualStudio() {
  return (
    <svg viewBox="0 0 30 30" className="size-[30px]">
      <path d="M0 8 5 5l9 8-9 12-5-3Z" fill="#6b4594" />
      <path d="M5 10v10l5-5Z" fill="#33221f" />
      <path d="m22 0-12 14 4 5 8-9Z" fill="#7b52a8" />
      <path d="M0 8 5 5l17 16v9L1 10Z" fill="#b17be8" />
      <path d="m22 0 8 4v22l-8 4Z" fill="#c991f7" />
    </svg>
  );
}

function TaskIcon({ children, mark, active }: { children: ReactNode; mark?: boolean; active?: boolean }) {
  return (
    <div className="flex w-[55px] shrink-0 justify-center">
      <div className={clsx('relative grid h-[50px] w-[50px] place-items-center rounded-[5px]', active && 'border border-white/10 bg-white/8')}>
        {children}
        {mark && <div className="absolute bottom-[1px] left-[21px] h-[4px] w-[8px] rounded-full bg-[#a09a98]" />}
        {active && <div className="absolute bottom-0 left-[14px] h-[4px] w-[20px] rounded-full bg-[#4cc2ff]" />}
      </div>
    </div>
  );
}

function Taskbar() {
  return (
    <div className="flex h-[60px] shrink-0 items-center border-t border-[#4b4640] bg-[linear-gradient(90deg,#2d2822_0px,#2d2822_370px,#3c1c2a_480px,#3c1c2a_700px,#33222a_840px,#381f29_940px,#2e2622_1040px,#2d2720_1200px,#2f241d_1450px,#321f15_1680px,#2d261b_1860px,#2d261b_1920px)] pb-px">
      <svg viewBox="0 0 28 28" className="ml-[26px] size-7">
        <defs><linearGradient id="moon" x1="1" y1="0" x2=".4" y2="1"><stop offset="0" stopColor="#ffd04a" /><stop offset="1" stopColor="#ef7a1c" /></linearGradient></defs>
        <path d="M18 0c7 3 11 10 9.5 17C25.5 25 19 28.5 12 28 6 27.5 1.5 24 0 18.5c5 1.500 10 .5 13.500-3.500S19 6 18 0Z" fill="url(#moon)" />
      </svg>
      <div className="ml-[10px] w-[383px] pb-px text-[14.5px] leading-[20px] text-[#cbc8c5]"><div className="tracking-[0.1px] text-white">-9°C</div><div>Ясно</div></div>
      <svg viewBox="0 0 29 29" className="size-[29px]">
        <defs><linearGradient id="win" x1="0" y1="0" x2="1" y2="1"><stop offset="0" stopColor="#8ae4ff" /><stop offset="1" stopColor="#0c98f5" /></linearGradient></defs>
        <path d="M0 0h14v14H0zM15 0h14v14H15zM0 15h14v14H0zM15 15h14v14H15z" fill="url(#win)" />
      </svg>
      <div className="ml-[18px] flex h-[38px] w-[273px] items-center overflow-hidden rounded-full bg-[#f3f1f3]">
        <svg viewBox="0 0 18 18" className="ml-[14px] size-[18px]" fill="none" stroke="#222" strokeWidth="1.9"><circle cx="7.5" cy="7.5" r="6.4" /><path d="m12 12.5 5 5" strokeWidth="2.4" /></svg>
        <span className="ml-[13px] text-[17px] text-[#626064]">Поиск</span>
        <svg viewBox="0 0 58 32" className="ml-auto mr-[6px] h-8 w-[58px]">
          <path d="M0 27q4-6 15-6h28q12 0 15 6l-7 4H8Z" fill="#e6b98c" />
          <path d="M8 30h43l-4 2H14Z" fill="#c9976a" />
          <path d="m5 10 13 2 8-3 4 12-9 2-14 4Z" fill="#f7f7fa" />
          <path d="m5 10 2 17 14-4 9-2" fill="none" stroke="#2f9150" strokeWidth="1.8" />
          <path d="m16 12 3 11M8 14l7 .5M9 17l7 .5M20 13l5-1.5M21 16l5-1.5" stroke="#b9b9c9" strokeWidth=".8" />
          <path d="m20 15 1.500-5 5-6 3 2-5 7Z" fill="#f7a93b" /><path d="m26.500 4 1.500-1.500q2-.5 2.500 2L29.500 6.500Z" fill="#ef5350" />
          <path d="M41 5q0-5 4-5t4 5" fill="none" stroke="#0a58c8" strokeWidth="1.5" />
          <rect x="36.500" y="3" width="16" height="23" rx="6" fill="#1186f5" /><path d="M36.500 18q8-6 16 0v5q0 3-3 3h-10q-3 0-3-3Z" fill="#0b62d6" /><path d="M39 20q0-6 5.500-6t5.500 6Z" fill="#2fa5ff" /><path d="M38 23h13" stroke="#8d7cf2" strokeWidth="2" />
        </svg>
      </div>
      <div className="ml-[3px] flex">
        <TaskIcon>
          <svg viewBox="0 0 30 28" className="h-7 w-[30px]"><rect x="7" width="23" height="20" rx="1" fill="#efefef" /><path d="M1 8h21.500v19.500H1Q0 27.500 0 26.500V9Q0 8 1 8Z" fill="#5f5c5e" /><path d="M7.500 8h15v12h-15Z" fill="#a5a3a5" /></svg>
        </TaskIcon>
        <TaskIcon mark>
          <svg viewBox="0 0 30 30" className="size-[30px]">
            <defs>
              <linearGradient id="edge-a" x1="0" y1="0" x2="1" y2=".4"><stop offset="0" stopColor="#2aa5e0" /><stop offset=".5" stopColor="#33c3d8" /><stop offset="1" stopColor="#74e655" /></linearGradient>
              <linearGradient id="edge-b" x1="0" y1="0" x2="0" y2="1"><stop offset="0" stopColor="#1b93d8" /><stop offset="1" stopColor="#0b4fa4" /></linearGradient>
            </defs>
            <path d="M.5 13C2 5 8 0 15 0c9 0 15 6.500 15 12.500 0 5-3.500 8-8 8-3.500 0-5-1.500-4-3 1.500-2 1-5-1.500-6.500C12 8.500 3 8 .5 13Z" fill="url(#edge-a)" />
            <path d="M0 15C.5 9.500 6 8 10.500 8.500c-4 2.500-5 6-4.500 10C7 25 12 29.500 16 30 6.500 30.500 0 23.500 0 15Z" fill="url(#edge-b)" />
            <path d="M6 18c-.5-4.500 2-8 5.500-9 3 0 5.500 1 6 3-4-.5-6 2.500-5.500 5.500.7 4.500 5 7 10 6.500 2.500-.3 4-1.500 5.500-2C25 27 20 30 15.500 30 10 29 6.500 24 6 18Z" fill="#1067b8" />
          </svg>
        </TaskIcon>
        <TaskIcon mark>
          <svg viewBox="0 0 30 28" className="h-7 w-[30px]"><path d="M0 2q0-2 2-2h8l3 3v5H0Z" fill="#dc9a00" /><path d="M0 6h11l3-3h15q1 0 1 1v23H0Z" fill="#ffcb39" /><path d="M5 27v-5q0-3 3-3h14q3 0 3 3v5Z" fill="#0f70c4" /><path d="M9 23h12" stroke="#094f93" strokeWidth="1.4" /></svg>
        </TaskIcon>
        <TaskIcon mark>
          <svg viewBox="0 0 30 30" className="size-[30px]" fill="none" strokeWidth="4.2"><circle cx="15" cy="15" r="15" fill="#fff" /><path d="m15 16.500 7.800-9.300" stroke="#f45bb0" /><path d="m7 7.500 8 9V26" stroke="#fc3f1d" /></svg>
        </TaskIcon>
        <TaskIcon><div className="grid size-[30px] place-items-center rounded-full bg-[#fc3f1d] text-[21px] font-semibold leading-none text-white"><span className="-mt-[2px]">Я</span></div></TaskIcon>
        <TaskIcon><div className="grid size-[30px] place-items-center rounded-full border-2 border-white bg-[#0a95d8] text-[25px] font-bold leading-none text-white"><span className="-mt-[3px]">?</span></div></TaskIcon>
        <TaskIcon>
          <VisualStudio />
          <svg viewBox="0 0 16 16" className="absolute bottom-[10px] right-[10px] size-4"><circle cx="8" cy="8" r="8" fill="#20c5b0" /><path d="M8 3.500v8M4.800 8.500 8 11.700l3.200-3.200" stroke="#fff" strokeWidth="1.5" fill="none" /></svg>
        </TaskIcon>
        <TaskIcon>
          <div className="relative grid size-[28px] place-items-center text-[21px] font-bold leading-none text-white">
            <svg viewBox="0 0 28 28" className="absolute inset-0"><defs><linearGradient id="sk" gradientUnits="userSpaceOnUse" x1="0" y1="0" x2="0" y2="28"><stop offset="0" stopColor="#10b5ee" /><stop offset="1" stopColor="#0a7bd4" /></linearGradient></defs><g fill="url(#sk)"><circle cx="14" cy="14" r="13" /><circle cx="8" cy="8" r="8" /><circle cx="20" cy="20" r="8" /></g></svg>
            <span className="relative -mt-[2px]">S</span>
          </div>
        </TaskIcon>
        <TaskIcon active><ChromeLogo className="size-[30px]" /></TaskIcon>
        <TaskIcon>
          <svg viewBox="0 0 30 30" className="size-[30px]"><path d="M4 3v14q0 3 7.500 3t7.500-3V3Z" fill="#ffd500" /><path d="M4 3v14q0 2.500 5 3V3Z" fill="#ffe566" /><ellipse cx="11.500" cy="3.500" rx="7.500" ry="2.500" fill="#f0b070" /><path d="M22 2.500h5.500V9M2.500 21v6H9" stroke="#4ca64c" strokeWidth="3" fill="none" /><path d="m15 26 10-10M16 16l10 11" stroke="#a05bb5" strokeWidth="2.3" /><path d="m12.500 17 5-3.500M22 14v4h5.500" stroke="#a05bb5" strokeWidth="2.3" fill="none" /></svg>
        </TaskIcon>
        <TaskIcon mark>
          <svg viewBox="0 0 32 31" className="-mt-px ml-[2px] h-[31px] w-8"><defs><linearGradient id="wps" x1="0" y1="0" x2="1" y2="1"><stop offset="0" stopColor="#ff2a1a" /><stop offset="1" stopColor="#ff6a00" /></linearGradient></defs><circle cx="15" cy="16" r="15" fill="url(#wps)" /><path d="M5.500 10.500H20M7 10.500l3.500 12 6-9.500 2 9.500 5-10" fill="none" stroke="#fff" strokeWidth="2" strokeLinejoin="round" /><path d="M22 0h7l3 3v9H22Z" fill="#5c8ff0" /><path d="M24 4v4.500l3-2 3 2V4" stroke="#fff" strokeWidth="1.3" fill="none" /></svg>
        </TaskIcon>
        <TaskIcon mark>
          <svg viewBox="0 0 30 30" className="size-[30px]"><defs><linearGradient id="mp" x1="0" y1="0" x2=".6" y2="1"><stop offset="0" stopColor="#ff8a3d" /><stop offset="1" stopColor="#9a64d8" /></linearGradient></defs><circle cx="15" cy="15" r="14" fill="#3a3a3c" stroke="url(#mp)" strokeWidth="2" /><path d="m11 8 11 7-11 7Z" fill="#fff" /></svg>
        </TaskIcon>
        <TaskIcon mark><VisualStudio /></TaskIcon>
      </div>
      <div className="ml-auto flex items-center pr-5 text-white">
        <svg viewBox="0 0 14 9" className="mr-[24px] h-[9px] w-[14px]" fill="none" stroke="#fff" strokeWidth="2"><path d="m1 8 6-6 6 6" /></svg>
        <svg viewBox="0 0 22 22" className="mr-[21px] size-[22px]" fill="none" stroke="#fff" strokeWidth="1.3"><path d="M1 10a9 8 0 0 1 17.500-3.500M19 1v6h-6.500M2 21v-6h6.500M2 15.500q3 5 9 5" /><circle cx="16" cy="16" r="5.200" fill="#ff9a0a" stroke="none" /></svg>
        <svg viewBox="0 0 16 20" className="mr-[22px] h-5 w-4" fill="none" stroke="#79d5f2" strokeWidth="1.5"><rect x="4.800" y=".8" width="6.400" height="12" rx="3.200" /><path d="M1.200 8.500a6.800 6.800 0 0 0 13.600 0M8 15.500V20" /></svg>
        <svg viewBox="0 0 20 16" className="mr-[10px] h-4 w-5" fill="none" stroke="#fff" strokeWidth="1.7"><path d="M.8 6.200a13 13 0 0 1 18.400 0M3.700 9.200a8.800 8.800 0 0 1 12.600 0M6.700 12a4.800 4.800 0 0 1 6.600 0" /><circle cx="10" cy="14.200" r="1.500" fill="#fff" stroke="none" /></svg>
        <svg viewBox="0 0 20 16" className="mr-[10px] h-4 w-5" fill="none" stroke="#fff" strokeWidth="1.4"><path d="M1 5.500h3l4.500-4v13L4 10.500H1ZM11 5.500q1.500 2.500 0 5M13.500 3.500q3 4.500 0 9" /><path d="M16 1.500q4.500 6.500 0 13" stroke="#8b847d" /></svg>
        <svg viewBox="0 0 21 16" className="mr-[19px] h-4 w-[21px]"><rect x="2" y="3" width="16" height="12" rx="2.500" fill="none" stroke="#fff" strokeWidth="1.5" /><rect x="4.500" y="5.300" width="11" height="7.400" rx="1" fill="#fff" /><path d="M18.500 7h2v4h-2z" fill="#fff" /><path d="M4 0 0 6h3l-1.500 5L7 4.500H4L5.500 0Z" fill="#fff" stroke="#312117" strokeWidth=".7" /></svg>
        <div className="mr-[11px] pb-px text-right text-[14.5px] leading-[20px] tracking-[-0.12px]"><div>22:45</div><div>27.11.2024</div></div>
        <svg viewBox="0 0 16 19" className="mr-[7px] h-[19px] w-4" fill="#8fe3fb"><path d="M8 0c4 0 6.500 3 6.500 6.500V12L16 14.500V15.500H0V14.500L1.500 12V6.500C1.500 3 4 0 8 0ZM5 16.500h6q-.5 2.500-3 2.500t-3-2.500Z" /></svg>
      </div>
    </div>
  );
}

export default function App() {
  return (
    <div className="flex h-[1080px] w-[1920px] flex-col overflow-hidden bg-white font-['Open_Sans','Noto_Sans',sans-serif] leading-normal">
      <TabStrip />
      <Toolbar />
      <InfoBar />
      <div className="flex min-h-0 flex-1 overflow-hidden">
        <div className="h-full w-[1899px] overflow-hidden">
          <RepoHeader />
          <div className="ml-[190px] w-[1520px]">
            <RepoTitle />
            <div className="mt-[30px] flex gap-[30px]">
              <div className="w-[1120px]">
                <FileToolbar />
                <FileTable />
                <Readme />
              </div>
              <Sidebar />
            </div>
          </div>
        </div>
        <Scrollbar />
      </div>
      <Taskbar />
    </div>
  );
}
